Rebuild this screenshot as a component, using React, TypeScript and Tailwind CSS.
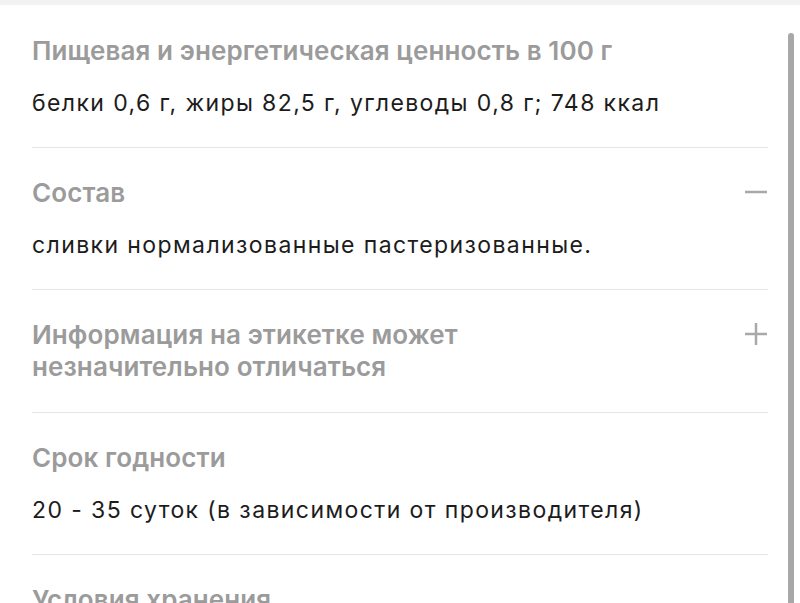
import React from "react";

type Sec = { title: string[]; body?: string; icon?: "minus" | "plus" };

const sections: Sec[] = [
  { title: ["Пищевая и энергетическая ценность в 100 г"], body: "белки 0,6 г, жиры 82,5 г, углеводы 0,8 г; 748 ккал" },
  { title: ["Состав"], body: "сливки нормализованные пастеризованные.", icon: "minus" },
  { title: ["Информация на этикетке может", "незначительно отличаться"], icon: "plus" },
  { title: ["Срок годности"], body: "20 - 35 суток (в зависимости от производителя)" },
  { title: ["Условия хранения"], body: "" },
];

function Icon({ kind }: { kind: "minus" | "plus" }) {
  return (
    <svg width="24" height="24" viewBox="0 0 24 24" className="shrink-0 mt-[3px]">
      <path d="M1 12h22" stroke="#a9a9a9" strokeWidth="2.5" />
      {kind === "plus" && <path d="M12 1v22" stroke="#a9a9a9" strokeWidth="2.5" />}
    </svg>
  );
}

export default function App() {
  return (
    <div
      className="relative w-[800px] h-[603px] overflow-hidden bg-white"
      style={{ fontFamily: 'Inter, "Open Sans", sans-serif' }}
    >
      <div className="h-[5px] bg-[#f2f2f2]" />
      <div className="px-8 pt-[1px]">
        {sections.map((s, i) => (
          <div
            key={i}
            className={`border-b border-[#e6e6e6] pt-[29px] ${s.body === undefined ? "pb-[29px]" : "pb-[28px]"}`}
          >
            <div className="flex items-start justify-between gap-4">
              <div className="text-[26px] leading-[32px] font-semibold tracking-[0.1px] text-[#9b9b9b]">
                {s.title.map((t, j) => (
                  <div key={j}>{t}</div>
                ))}
              </div>
              {s.icon && <Icon kind={s.icon} />}
            </div>
            {s.body !== undefined && (
              <div className="mt-[20px] text-[23px] leading-[32px] tracking-[1.4px] text-[#1c1c1c]">
                {s.body}
              </div>
            )}
          </div>
        ))}
      </div>
      <div className="absolute right-[6px] top-[33px] w-[6px] h-[600px] rounded-t-full bg-[#a8a8a8]" />
    </div>
  );
}
